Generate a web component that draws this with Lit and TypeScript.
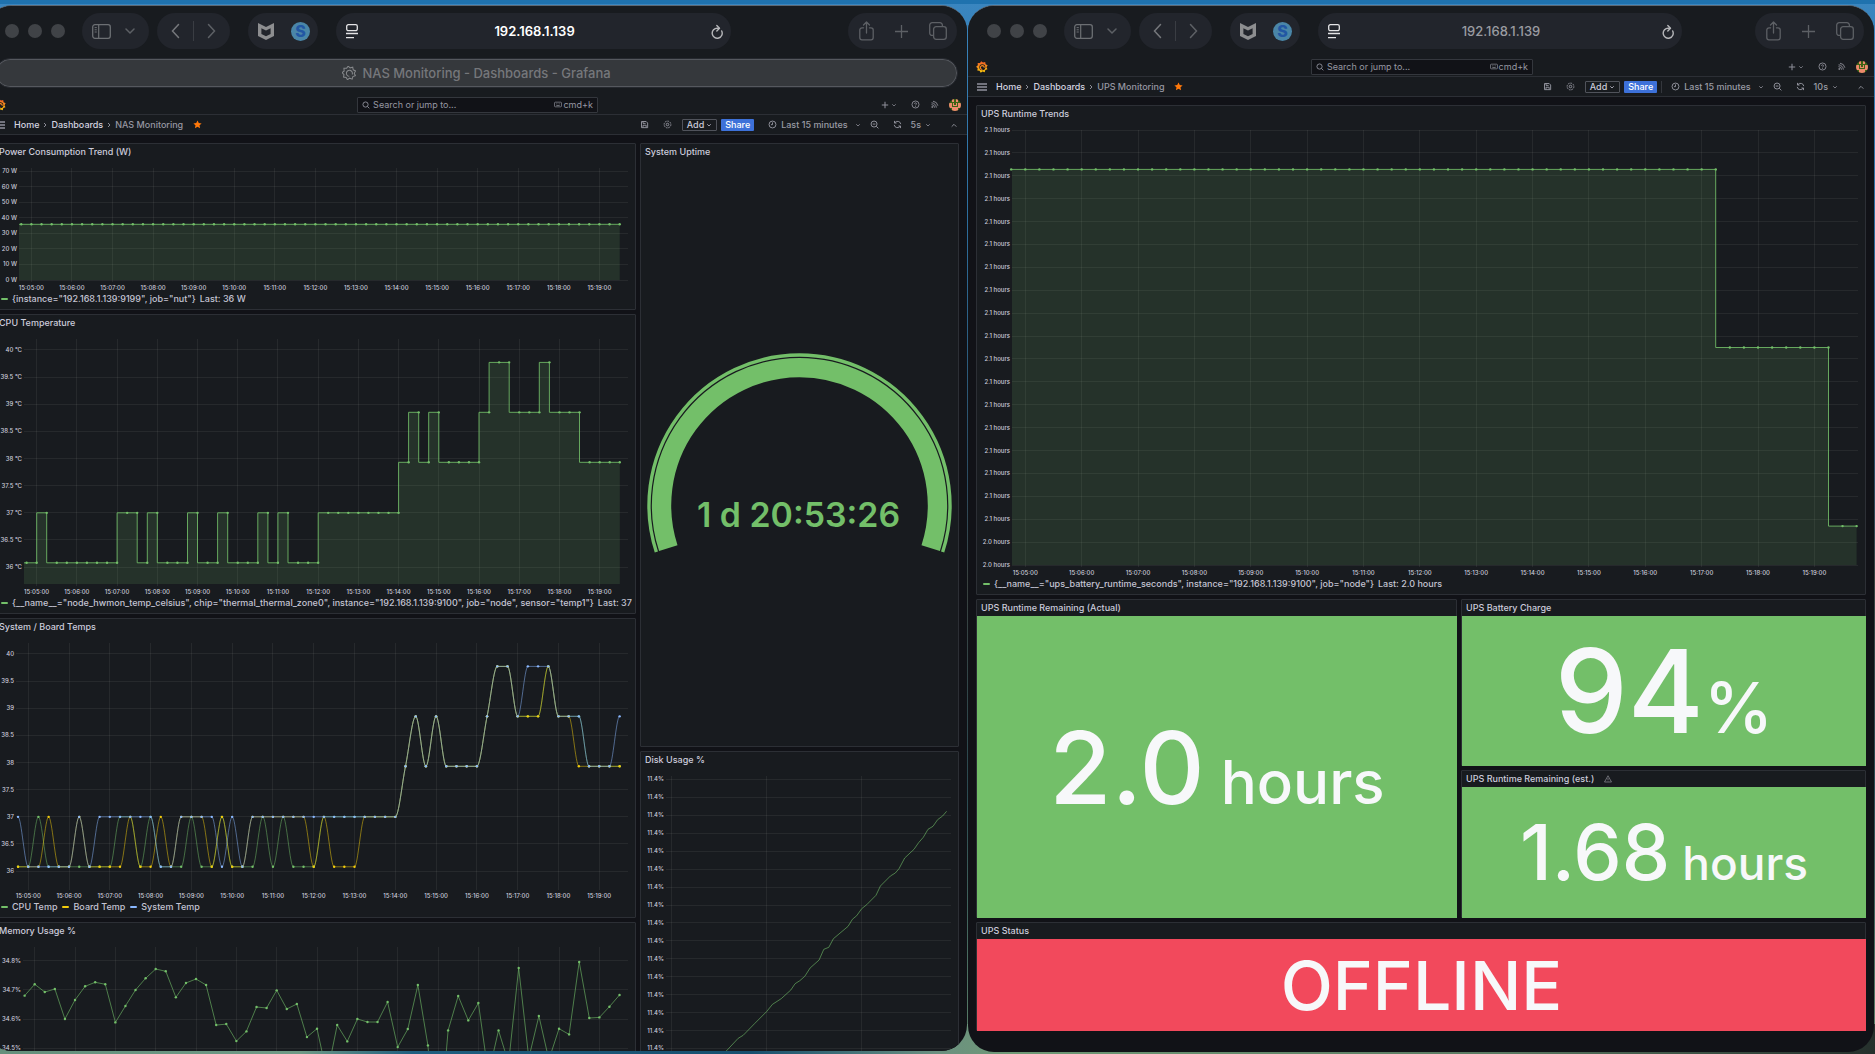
import { LitElement, html, svg, css, nothing } from "lit";
import { customElement, property, state } from "lit/decorators.js";

const GREEN = "#73bf69";
const YELLOW = "#f2cc0c";
const BLUE = "#8ab8ff";

interface Series {
  color: string;
  values: number[];
  times?: number[];
}
interface Tick {
  at: number;
  label: string;
}
interface ChartSpec {
  left: number;
  foot: number;
  tMin: number;
  tMax: number;
  vMin: number;
  vMax: number;
  yTicks: Tick[];
  xTicks: Tick[];
  series: Series[];
  shape: "step" | "smooth" | "linear";
  fill?: boolean;
  dots?: boolean;
}

const minuteTicks = (labels = true): Tick[] =>
  Array.from({ length: 15 }, (_, i) => ({ at: i, label: labels ? `15:${String(i + 5).padStart(2, "0")}:00` : "" }));

const range = (from: number, to: number, step: number, fmt: (v: number) => string): Tick[] => {
  const out: Tick[] = [];
  for (let i = 0; from + i * step <= to + 0.0001; i++) {
    const at = from + i * step;
    out.push({ at, label: fmt(at) });
  }
  return out;
};

/** Temperature levels, one digit per 15 s sample. */
const LEVELS = [36.08, 37, 37.93, 38.85, 39.77];
const levels = (code: string) => [...code].map((c) => LEVELS[Number(c)]);

const cpuTemp = levels("001000000011010001001000101000" + "111111112323222234433343332222");
const boardTemp = levels("000100100001001011101001111110" + "100011112323222234433343322222");
const sysTemp = levels("100000101111110011110101111111" + "111111112323222234434443332223");

const memory = [
  288, 254, 277, 268, 358, 301, 260, 248, 254, 368, 319, 271, 236, 208, 215, 293, 250, 238, 256, 376, 373, 424, 395,
  322, 325, 272, 328, 313, 412, 387, 525, 376, 425, 358, 367, 367, 307, 442, 388, 256, 437, 750, 392, 289, 362, 310,
  525, 392, 490, 205, 475, 349, 480, 387, 404, 187, 355, 353, 321, 286,
].map((y) => 34.8 - (y - 184) / 870);

const diskPath: [number, number][] = [
  [270, 982], [290, 962], [325, 925], [340, 916], [375, 880], [410, 845], [428, 823], [454, 806], [483, 780],
  [496, 761], [510, 752], [525, 739], [541, 714], [568, 690], [582, 658], [597, 652], [611, 626], [655, 589],
  [668, 568], [681, 557], [696, 536], [711, 524], [739, 496], [752, 468], [782, 438], [797, 429], [808, 416],
  [825, 384], [853, 358], [867, 338], [881, 322], [895, 298], [910, 289], [924, 269], [939, 258], [951, 244],
];

const powerSpec: ChartSpec = {
  left: 24, foot: 12, tMin: -0.305, tMax: 14.705, vMin: 0, vMax: 72,
  yTicks: range(0, 70, 10, (v) => `${v} W`),
  xTicks: minuteTicks(),
  series: [{ color: GREEN, values: Array(60).fill(35.8) }],
  shape: "step", fill: true, dots: true,
};
const cpuSpec: ChartSpec = {
  left: 29, foot: 12, tMin: -0.315, tMax: 14.705, vMin: 35.69, vMax: 40.2,
  yTicks: range(36, 40, 0.5, (v) => `${v} °C`),
  xTicks: minuteTicks(),
  series: [{ color: GREEN, values: cpuTemp }],
  shape: "step", fill: true, dots: true,
};
const boardSpec: ChartSpec = {
  left: 21, foot: 12, tMin: -0.3, tMax: 14.705, vMin: 35.69, vMax: 40.2,
  yTicks: range(36, 40, 0.5, (v) => `${v}`),
  xTicks: minuteTicks(),
  series: [
    { color: GREEN, values: cpuTemp },
    { color: YELLOW, values: boardTemp },
    { color: BLUE, values: sysTemp },
  ],
  shape: "smooth", dots: true,
};
const memorySpec: ChartSpec = {
  left: 28, foot: 30, tMin: -0.29, tMax: 14.71, vMin: 34.49, vMax: 34.848,
  yTicks: range(34.5, 34.8, 0.1, (v) => `${v.toFixed(1)}%`),
  xTicks: minuteTicks(false),
  series: [{ color: GREEN, values: memory }],
  shape: "linear", dots: true,
};
const diskSpec: ChartSpec = {
  left: 25, foot: 30, tMin: -0.28, tMax: 14.74, vMin: -15.14, vMax: 0.195,
  yTicks: range(-15, 0, 1, () => "11.4%"),
  xTicks: [0, 5, 10].map((at) => ({ at, label: "" })),
  series: [
    { color: GREEN, values: diskPath.map(([, y]) => -(y - 148.5) / 53.8), times: diskPath.map(([x]) => (x - 124) / 57) },
  ],
  shape: "linear",
};
const upsSpec: ChartSpec = {
  left: 35, foot: 12, tMin: -0.236, tMax: 14.774, vMin: 0, vMax: 19,
  yTicks: range(0, 19, 1, (v) => (v < 2 ? "2.0 hours" : "2.1 hours")),
  xTicks: minuteTicks(),
  series: [{ color: GREEN, values: [...Array(51).fill(17.28), ...Array(8).fill(9.5), 1.7, 1.7] }],
  shape: "step", fill: true, dots: true,
};

@customElement("time-chart")
class TimeChart extends LitElement {
  @property({ attribute: false }) spec!: ChartSpec;
  @state() private w = 0;
  @state() private h = 0;
  private observer?: ResizeObserver;

  static styles = css`
    :host { display: block; flex: 1; min-height: 0; min-width: 0; overflow: hidden; }
    .plot { display: block; font: 500 6px/1 Inter, sans-serif; }
    .grid { stroke: rgba(204, 214, 204, 0.08); stroke-width: 1; shape-rendering: crispEdges; }
    .tick { fill: #ccccdc; }
  `;

  connectedCallback() {
    super.connectedCallback();
    this.observer = new ResizeObserver(() => this.measure());
    this.observer.observe(this);
  }
  disconnectedCallback() {
    super.disconnectedCallback();
    this.observer?.disconnect();
  }
  private measure() {
    this.w = this.clientWidth;
    this.h = this.clientHeight;
  }

  private line(pts: [number, number][], left: number) {
    const f = (n: number) => n.toFixed(1);
    if (this.spec.shape === "step") {
      let d = `M${f(left)} ${f(pts[0][1])}H${f(Math.max(left, pts[0][0]))}`;
      for (let i = 1; i < pts.length; i++) {
        if (pts[i][1] !== pts[i - 1][1]) d += `V${f(pts[i][1])}`;
        d += `H${f(pts[i][0])}`;
      }
      return d;
    }
    if (this.spec.shape === "linear") {
      return "M" + pts.map(([x, y]) => `${f(x)} ${f(y)}`).join("L");
    }
    const slope = (i: number) => (pts[i + 1][1] - pts[i][1]) / (pts[i + 1][0] - pts[i][0]);
    const tangent = (i: number) => {
      if (i === 0 || i === pts.length - 1) return 0;
      const a = slope(i - 1);
      const b = slope(i);
      return a * b <= 0 ? 0 : (2 * a * b) / (a + b);
    };
    let d = `M${f(pts[0][0])} ${f(pts[0][1])}`;
    for (let i = 0; i < pts.length - 1; i++) {
      const [x0, y0] = pts[i];
      const [x1, y1] = pts[i + 1];
      const t = (x1 - x0) / 3;
      d += `C${f(x0 + t)} ${f(y0 + t * tangent(i))} ${f(x1 - t)} ${f(y1 - t * tangent(i + 1))} ${f(x1)} ${f(y1)}`;
    }
    return d;
  }

  render() {
    if (!this.w || !this.h) return nothing;
    const s = this.spec;
    const top = 8;
    const right = this.w - 7;
    const bottom = this.h - s.foot;
    const X = (t: number) => s.left + ((t - s.tMin) / (s.tMax - s.tMin)) * (right - s.left);
    const Y = (v: number) => bottom - ((v - s.vMin) / (s.vMax - s.vMin)) * (bottom - top);
    const strength = s.fill ? 0.85 : s.shape === "smooth" ? 0.5 : 0.6;
    return html`<svg class="plot" width=${this.w} height=${this.h} role="img" aria-label="Time series">
      ${s.yTicks.map(
        (t) => svg`<line class="grid" x1=${s.left} x2=${right} y1=${Y(t.at)} y2=${Y(t.at)}></line>
          <text class="tick" x=${s.left - 2} y=${Y(t.at) + 2} text-anchor="end">${t.label}</text>`
      )}
      ${s.xTicks.map(
        (t) => svg`<line class="grid" x1=${X(t.at)} x2=${X(t.at)} y1=${top} y2=${bottom + 2}></line>
          ${t.label ? svg`<text class="tick" x=${X(t.at)} y=${bottom + 10} text-anchor="middle">${t.label}</text>` : nothing}`
      )}
      ${s.series.map((serie) => {
        const pts = serie.values.map((v, i): [number, number] => [
          X(serie.times ? serie.times[i] : -0.25 + i * 0.25),
          Y(v),
        ]);
        const d = this.line(pts, s.left);
        return svg`
          ${s.fill ? svg`<path d=${`${d}V${bottom}H${s.left}Z`} fill=${serie.color} fill-opacity="0.15"></path>` : nothing}
          <path d=${d} fill="none" stroke=${serie.color} stroke-width="1" stroke-opacity=${strength}></path>
          ${s.dots ? pts.map(([x, y]) => svg`<circle cx=${x} cy=${y} r="1.2" fill=${serie.color}></circle>`) : nothing}`;
      })}
    </svg>`;
  }
}

@customElement("uptime-gauge")
class UptimeGauge extends LitElement {
  @property() value = "";
  static styles = css`
    :host { flex: 1; display: flex; align-items: center; justify-content: center; padding: 0 6px; min-height: 0; }
    .dial { display: block; width: 100%; max-height: 100%; }
    .ring { fill: none; stroke: #73bf69; }
    .value { fill: #73bf69; font: 600 34px/1 Inter, sans-serif; }
  `;
  private arc(r: number) {
    const a = (18 * Math.PI) / 180;
    const dx = r * Math.cos(a);
    const y = 153 + r * Math.sin(a);
    return `M${153 - dx} ${y}A${r} ${r} 0 1 1 ${153 + dx} ${y}`;
  }
  render() {
    return html`<svg class="dial" viewBox="0 0 306 200" role="img" aria-label="System uptime">
      <path class="ring" d=${this.arc(151)} stroke-width="3.4"></path>
      <path class="ring" d=${this.arc(138.4)} stroke-width="19.4"></path>
      <text class="value" x="152" y="175" text-anchor="middle">${this.value}</text>
    </svg>`;
  }
}

@customElement("dash-panel")
class DashPanel extends LitElement {
  @property() heading = "";
  @property({ type: Boolean }) warning = false;
  @property({ attribute: false }) legend: { color: string; text: string; last?: string }[] = [];
  static styles = css`
    :host {
      display: flex; flex-direction: column; box-sizing: border-box; min-width: 0; min-height: 0;
      background: #181b1f; border: 1px solid #2c2f35; border-radius: 1px; font-family: Inter, sans-serif;
    }
    .head { display: flex; align-items: center; gap: 10px; height: 16px; flex: none; padding: 0 4px; }
    .title { margin: 0; font-size: 9px; line-height: 16px; font-weight: 500; color: #ccccdc; white-space: nowrap; }
    .warn { width: 8px; height: 8px; display: block; }
    .legend {
      display: flex; gap: 5px; height: 14px; flex: none; margin: 0 3px 3px 6px; padding: 0; list-style: none;
      overflow: hidden; font-size: 9px; line-height: 14px; font-weight: 500; color: #c4c4d3; white-space: nowrap;
    }
    .entry { display: flex; align-items: center; gap: 4px; flex: none; }
    .dash { width: 7px; height: 2px; border-radius: 1px; }
    .green { background: #73bf69; }
    .yellow { background: #f2cc0c; }
    .blue { background: #8ab8ff; }
  `;
  render() {
    return html`
      <header class="head">
        <h2 class="title">${this.heading}</h2>
        ${this.warning
          ? html`<svg class="warn" viewBox="0 0 16 16" fill="none" stroke="#85878f" stroke-width="1.5">
              <path d="M8 1.5 15 14H1Z" stroke-linejoin="round"></path><path d="M8 6v4M8 11.4v1.2"></path>
            </svg>`
          : nothing}
      </header>
      <slot></slot>
      ${this.legend.length
        ? html`<ul class="legend">
            ${this.legend.map(
              (l) => html`<li class="entry"><span class="dash ${l.color}"></span><span>${l.text}</span>${l.last
                ? html`<span>${l.last}</span>`
                : nothing}</li>`
            )}
          </ul>`
        : nothing}
    `;
  }
}

const petals = (() => {
  const pts: string[] = [];
  for (let i = 0; i < 18; i++) {
    const r = i % 2 ? 9 : 11.8;
    const a = (i / 18) * Math.PI * 2 - 0.3;
    pts.push(`${(12 + r * Math.cos(a)).toFixed(1)} ${(12 + r * Math.sin(a)).toFixed(1)}`);
  }
  return `M${pts.join("L")}Z`;
})();
const spiral = "M17.500 14.500a5.200 5.200 0 1 0-5 3.200";

const icon = (cls: string, box: string, body: unknown) =>
  html`<svg class=${cls} viewBox=${box} aria-hidden="true">${body}</svg>`;

const caret = () => icon("caret", "0 0 12 12", svg`<path d="M2.5 4.5 6 8l3.5-3.5"></path>`);

@customElement("browser-window")
class BrowserWindow extends LitElement {
  @property() address = "";
  @property() tab = "";
  @property() dashboard = "";
  @property() interval = "";
  @property({ type: Boolean }) focused = false;
  @property({ type: Boolean }) divider = false;

  static styles = css`
    :host {
      display: flex; flex-direction: column; box-sizing: border-box; min-width: 0; overflow: hidden;
      border-top: 1px solid #5d6873; border-radius: 26px; background: #111217;
      font-family: Inter, sans-serif; color: #ccccdc;
    }
    svg { display: block; flex: none; fill: none; stroke: currentColor; }
    button, input { font: inherit; color: inherit; margin: 0; padding: 0; border: 0; background: none; min-width: 0; outline: none; }
    button { display: flex; align-items: center; }
    a { color: inherit; text-decoration: none; }

    .chrome { display: flex; align-items: center; flex: none; height: 51px; box-sizing: border-box; padding: 0 10px 1px 19px; background: #181b1f; }
    .lights { display: flex; gap: 9px; margin-right: 17px; }
    .light { width: 14px; height: 14px; border-radius: 50%; background: #404347; }
    .pill { display: flex; align-items: center; box-sizing: border-box; height: 36px; border-radius: 18px; background: #22252c; color: #5d6065; }
    .views { width: 67px; padding: 0 14px 0 10px; justify-content: space-between; margin-right: 8px; }
    .history { width: 73px; padding: 0 14px; justify-content: space-between; margin-right: 18px; }
    .extensions { width: 70px; padding: 0 8px 0 10px; justify-content: space-between; margin-right: 18px; }
    .rule { width: 1px; height: 20px; background: #3a3d43; }
    .location { width: 41.5%; padding: 0 8px 0 10px; gap: 8px; color: #9a9ba0; }
    .url { flex: 1; width: 0; text-align: center; font-size: 13px; line-height: 20px; font-weight: 500; color: #9a9ca1; }
    .url.on { color: #fff; font-weight: 600; }
    .actions { width: 109px; margin-left: auto; padding: 0 10px 0 11px; justify-content: space-between; }
    .side { width: 19px; height: 15px; color: #6c6f73; }
    .down { width: 10px; height: 10px; }
    .arrow { width: 9px; height: 16px; }
    .arrow.back { color: #75777b; }
    .shield { width: 16px; height: 17px; fill: #8d8e90; stroke: none; }
    .skype { width: 19px; height: 19px; border-radius: 50%; background: #4a86a8; color: #2257a4; justify-content: center; font-size: 16px; line-height: 19px; font-weight: 800; }
    .reader { width: 12px; height: 15px; color: #e4e4e6; }
    .reload { width: 12px; height: 15px; color: #b5b6b9; }
    .share { width: 15px; height: 20px; }
    .new { width: 13px; height: 13px; }
    .stack { width: 18px; height: 18px; }

    .tabs { flex: none; height: 38px; box-sizing: border-box; padding: 1px 9px 0; background: #181b1f; }
    .tab {
      display: flex; align-items: center; justify-content: center; gap: 6px; height: 30px; box-sizing: border-box; width: 100%;
      border-radius: 15px; border: 1px solid #26292f; box-shadow: inset 0 0 0 1px #55585e; background: #35383c;
      font-size: 13px; line-height: 20px; font-weight: 500; color: #75777b;
    }
    .favicon { width: 14px; height: 14px; color: #85878a; }

    .bar { display: flex; align-items: center; flex: none; height: 20px; box-sizing: border-box; background: #181b1f; border-bottom: 1px solid #2c2f35; font-size: 9px; line-height: 12px; }
    .top { padding: 0 6px 0 8px; justify-content: space-between; }
    .edge { flex: 1; display: flex; align-items: center; }
    .user { justify-content: flex-end; gap: 10px; color: #8e8f99; }
    .logo { width: 12px; height: 12px; }
    .search { display: flex; align-items: center; width: 24.9%; height: 16px; box-sizing: border-box; padding: 0 4px; gap: 3px; border: 1px solid #34373d; border-radius: 1px; background: #111217; color: #9697a2; }
    .query { flex: 1; width: 0; font-size: 9px; line-height: 12px; }
    .query::placeholder { color: #9697a2; opacity: 1; }
    .hint { display: flex; align-items: center; gap: 1px; }
    .keys { width: 8px; height: 7px; }
    .i { width: 9px; height: 9px; stroke-width: 1.2; }
    .i7 { width: 8px; height: 8px; stroke-width: 1.3; }
    .caret { width: 6px; height: 6px; stroke-width: 1.5; }
    .create { gap: 2px; margin-right: 4px; }
    .avatar { width: 12px; height: 12px; border-radius: 50%; }

    .nav { padding: 0 9px; color: #9a9ba5; font-weight: 500; }
    .menu { width: 10px; height: 10px; color: #ccccdc; margin-right: 9px; }
    .crumbs { display: flex; align-items: center; gap: 4px; }
    .crumb { color: #d5d5e0; }
    .here { color: #9697a2; }
    .sep { width: 4px; height: 6px; }
    .star { width: 9px; height: 9px; fill: #ff780a; stroke: none; margin-left: 10px; }
    .tools { display: flex; align-items: center; margin-left: auto; }
    .save { margin-right: 14px; }
    .gear { margin-right: 10px; }
    .add { gap: 2px; height: 12px; padding: 0 4px; border: 1px solid #50535b; color: #ccccdc; box-sizing: border-box; margin-right: 4px; border-radius: 1px; }
    .go { height: 12px; padding: 0 4px; background: #3d71d9; color: #fff; border-radius: 1px; }
    .split { width: 1px; height: 12px; margin: 0 9px 0 4px; }
    .split.on { background: #34373d; }
    .time { gap: 4px; margin-right: 9px; }
    .time .caret { margin-left: 3px; }
    .zoom { margin-right: 14px; }
    .refresh { margin-right: 9px; }
    .every { gap: 4px; margin-right: 19px; }
    .body { flex: 1; min-height: 0; padding: 8px; overflow: hidden; }
  `;

  render() {
    return html`
      <div class="chrome">
        <div class="lights"><span class="light"></span><span class="light"></span><span class="light"></span></div>
        <div class="pill views">
          <button aria-label="Sidebar">${icon("side", "0 0 19 15", svg`<rect x=".7" y=".7" width="17.6" height="13.6" rx="2.2" stroke-width="1.3"></rect><path d="M6.7.7v13.6" stroke-width="1.2"></path><path d="M2.6 3.6h2.2M2.6 5.8h2.2M2.6 8h2.2"></path>`)}</button>
          <button aria-label="Tab groups">${icon("down", "0 0 10 10", svg`<path d="M1 3l4 4 4-4" stroke-width="1.5" stroke-linecap="round"></path>`)}</button>
        </div>
        <div class="pill history">
          <button aria-label="Back">${icon("arrow back", "0 0 9 16", svg`<path d="M7.5 1.5 1.5 8l6 6.5" stroke-width="1.5" stroke-linecap="round"></path>`)}</button>
          <span class="rule"></span>
          <button aria-label="Forward">${icon("arrow", "0 0 9 16", svg`<path d="m1.5 1.5 6 6.5-6 6.5" stroke-width="1.5" stroke-linecap="round"></path>`)}</button>
        </div>
        <div class="pill extensions">
          <button aria-label="Web protection">${icon("shield", "0 0 16 17", svg`<path fill-rule="evenodd" d="M0 0 8 4l8-4v13l-8 4-8-4ZM3.4 5.2v5.9L8 13.3l4.6-2.2V5.2L8 7.6Z"></path>`)}</button>
          <button class="skype" aria-label="Extension">S</button>
        </div>
        <div class="pill location">
          ${icon("reader", "0 0 12 15", svg`<rect x=".7" y=".7" width="10.6" height="6" rx="1.6" stroke-width="1.3"></rect><path d="M0 9.5h12M0 13.6h8" stroke-width="1.3"></path>`)}
          <input class="url ${this.focused ? "on" : ""}" aria-label="Address" .value=${this.address} />
          <button aria-label="Reload">${icon("reload", "0 0 12 15", svg`<path d="M10.700 7A5 5 0 1 1 6.400 4.200H8" stroke-width="1.4" stroke-linecap="round"></path><path d="M5.800 1.400 8.500 4.200 5.800 7" stroke-width="1.4" stroke-linecap="round" stroke-linejoin="round"></path>`)}</button>
        </div>
        <div class="pill actions">
          <button aria-label="Share page">${icon("share", "0 0 15 20", svg`<path d="M4.6 6.8H3A2.2 2.2 0 0 0 .8 9v7.6A2.2 2.2 0 0 0 3 18.8h9a2.2 2.2 0 0 0 2.2-2.2V9A2.2 2.2 0 0 0 12 6.8h-1.600M7.5 12V1.200M4.500 4l3-3 3 3" stroke-width="1.3" stroke-linecap="round" stroke-linejoin="round"></path>`)}</button>
          <button aria-label="New tab">${icon("new", "0 0 13 13", svg`<path d="M6.5 0v13M0 6.5h13" stroke-width="1.3"></path>`)}</button>
          <button aria-label="Tab overview">${icon("stack", "0 0 18 18", svg`<rect x="4.6" y="4.6" width="12.7" height="12.7" rx="2.6" stroke-width="1.3"></rect><path d="M13.4 4.4V3.2A2.5 2.5 0 0 0 10.9.7H3.2A2.5 2.5 0 0 0 .7 3.2v7.7a2.5 2.5 0 0 0 2.5 2.5h1.2" stroke-width="1.3"></path>`)}</button>
        </div>
      </div>
      ${this.tab
        ? html`<div class="tabs"><button class="tab">
            ${icon("favicon", "0 0 24 24", svg`<path d=${petals} stroke-width="1.8"></path><path d=${spiral} stroke-width="1.8"></path>`)}
            <span>${this.tab}</span></button></div>`
        : nothing}
      <div class="bar top">
        <div class="edge"><a href="#" aria-label="Grafana">
          ${icon("logo", "0 0 24 24", svg`<defs><linearGradient id="g" x1="0" y1="0" x2="0" y2="1"><stop offset="0" stop-color="#f05a28"></stop><stop offset="1" stop-color="#fbca0a"></stop></linearGradient></defs><path d=${petals} fill="url(#g)" stroke="none"></path><circle cx="12.6" cy="12.6" r="6" fill="#181b1f" stroke="none"></circle><path d="M16.5 13.5a3.9 3.9 0 1 0-3.900 3.500" stroke="#f6861f" stroke-width="2.2"></path>`)}
        </a></div>
        <label class="search">
          ${icon("i7", "0 0 12 12", svg`<circle cx="5.3" cy="5.3" r="3.9"></circle><path d="m8.2 8.2 2.8 2.8"></path>`)}
          <input class="query" type="text" aria-label="Search" placeholder="Search or jump to..." />
          <span class="hint">${icon("keys", "0 0 12 10", svg`<rect x=".8" y="1.5" width="10.4" height="7" rx="1.2"></rect><path d="M3 4h1M5.5 4h1M8 4h1M3.5 6.5h5"></path>`)}<span>cmd+k</span></span>
        </label>
        <div class="edge user">
          <button class="create" aria-label="New">${icon("i7", "0 0 10 10", svg`<path d="M5 1v8M1 5h8"></path>`)}${caret()}</button>
          <button aria-label="Help">${icon("i", "0 0 12 12", svg`<circle cx="6" cy="6" r="4.7"></circle><path d="M4.7 5a1.3 1.3 0 1 1 1.7 1.3c-.3.1-.4.3-.4.7M6 8v1"></path>`)}</button>
          <button aria-label="News">${icon("i", "0 0 12 12", svg`<path d="M2 6.2a4 4 0 0 1 4 4M2 3.8a6.4 6.4 0 0 1 6.4 6.4M4 1.6a7.5 7.5 0 0 1 6.5 6"></path><circle cx="3" cy="9.3" r=".7" fill="currentColor"></circle>`)}</button>
          <button aria-label="Profile">${icon("avatar", "0 0 12 12", svg`<rect width="12" height="12" fill="#3f6414" stroke="none"></rect><path stroke="none" fill="#ee8a6c" d="M3 0h2v3H3zM7 0h2v3H7zM0 4h3v5H0zM9 4h3v5H9zM4 4h1v3H4zM7 4h1v3H7zM3 8h6v4H3zM5 6h2v1H5z"></path>`)}</button>
        </div>
      </div>
      <div class="bar nav">
        <button aria-label="Menu">${icon("menu", "0 0 10 10", svg`<path d="M0 2h10M0 5h10M0 8h10" stroke-width="1.1"></path>`)}</button>
        <nav class="crumbs" aria-label="Breadcrumb">
          <a class="crumb" href="#">Home</a>
          ${icon("sep", "0 0 4 6", svg`<path d="m1 1 2 2-2 2" stroke-width=".9"></path>`)}
          <a class="crumb" href="#">Dashboards</a>
          ${icon("sep", "0 0 4 6", svg`<path d="m1 1 2 2-2 2" stroke-width=".9"></path>`)}
          <span class="here">${this.dashboard}</span>
        </nav>
        <button aria-label="Starred">${icon("star", "0 0 24 24", svg`<path d="m12 1 3.4 7 7.6 1-5.6 5.3 1.4 7.7L12 18.3 5.2 22l1.4-7.7L1 9l7.6-1Z"></path>`)}</button>
        <div class="tools">
          <button class="save" aria-label="Save">${icon("i", "0 0 12 12", svg`<path d="M2 2h6.2L10.2 4v6.200H2ZM4 2v2.500h3.500M4 10V7h4.200v3"></path>`)}</button>
          <button class="gear" aria-label="Settings">${icon("i", "0 0 12 12", svg`<circle cx="6" cy="6" r="1.7"></circle><circle cx="6" cy="6" r="4.5" stroke-dasharray="2.4 1"></circle>`)}</button>
          <button class="add">Add ${caret()}</button>
          <button class="go">Share</button>
          <span class="split ${this.divider ? "on" : ""}"></span>
          <button class="time">${icon("i", "0 0 12 12", svg`<circle cx="6" cy="6" r="4.6"></circle><path d="M6 3.2V6.200H4"></path>`)}<span>Last 15 minutes</span>${caret()}</button>
          <button class="zoom" aria-label="Zoom out">${icon("i", "0 0 12 12", svg`<circle cx="5.4" cy="5.4" r="4"></circle><path d="m8.4 8.4 2.8 2.8M3.600 5.400h3.600"></path>`)}</button>
          <button class="refresh" aria-label="Refresh">${icon("i", "0 0 12 12", svg`<path d="M10.4 5.5a4.4 4.4 0 0 0-8-1.8M1.6 6.5a4.4 4.4 0 0 0 8 1.8M2 1.2v2.800h2.800M10 10.800V8H7.200"></path>`)}</button>
          <button class="every" aria-label="Refresh interval">${this.interval}${caret()}</button>
          <button aria-label="Collapse">${icon("i7", "0 0 12 12", svg`<path d="m2.5 8.5 3.5-3.500 3.500 3.500"></path>`)}</button>
        </div>
      </div>
      <div class="body"><slot></slot></div>
    `;
  }
}

@customElement("app-root")
class AppRoot extends LitElement {
  static styles = css`
    :host { display: block; font-family: Inter, sans-serif; }
    .desktop {
      display: flex; gap: 1px; box-sizing: border-box; height: 100vh; padding: 5px 1px 2px 0; overflow: hidden;
      background:
        linear-gradient(#1f72ae, #1f72ae) top / 100% 4px no-repeat,
        linear-gradient(90deg, #64907c, #6f9a86 16%, #205f80 22%, #17506f 40%, #6b9080 50%, #6f9a76 54%, #5a7a62 80%, #25302c) bottom / 100% 30px no-repeat,
        linear-gradient(#3a86c0, #2d6f9f 20%, #2b4d63 45%, #39413f 55%, #2b4b52 75%, #5b8068);
    }
    .nas { flex: 981; margin: 0 0 1px -14px; }
    .ups { flex: 906; }
    .nas-grid { display: grid; grid-template-columns: 642fr 319fr; gap: 4px; }
    .column { display: grid; gap: 4px; align-content: start; min-width: 0; }
    .nas-left { grid-template-rows: 167px 300px 300px 160px; }
    .nas-right { grid-template-rows: 604px 331px; }
    .ups-grid { display: grid; gap: 4px; grid-template-columns: 481fr 405fr; grid-template-rows: 490px 167px 148px 109px; }
    .wide { grid-column: 1 / -1; }
    .tall { grid-row: 2 / 4; }
    .stat { flex: 1; display: flex; align-items: center; justify-content: center; margin: 0 -1px -1px 0; color: #f7f8fa; font-weight: 500; white-space: nowrap; }
    .reading { line-height: 1; white-space: pre; }
    .good { background: #73bf69; }
    .bad { background: #f2495c; }
    .runtime { font-size: 101px; }
    .runtime-unit { font-size: 60px; }
    .charge { font-size: 116px; }
    .charge-unit { font-size: 70px; }
    .estimate { font-size: 77px; }
    .estimate-unit { font-size: 46px; }
    .status { font-size: 68px; }
  `;
  render() {
    return html`<main class="desktop">
      <browser-window class="nas" address="192.168.1.139" tab="NAS Monitoring - Dashboards - Grafana" dashboard="NAS Monitoring" interval="5s" focused>
        <div class="nas-grid">
          <div class="column nas-left">
            <dash-panel heading="Power Consumption Trend (W)" .legend=${[{ color: "green", text: '{instance="192.168.1.139:9199", job="nut"}', last: "Last: 36 W" }]}>
              <time-chart .spec=${powerSpec}></time-chart>
            </dash-panel>
            <dash-panel heading="CPU Temperature" .legend=${[{ color: "green", text: '{__name__="node_hwmon_temp_celsius", chip="thermal_thermal_zone0", instance="192.168.1.139:9100", job="node", sensor="temp1"}', last: "Last: 37" }]}>
              <time-chart .spec=${cpuSpec}></time-chart>
            </dash-panel>
            <dash-panel heading="System / Board Temps" .legend=${[{ color: "green", text: "CPU Temp" }, { color: "yellow", text: "Board Temp" }, { color: "blue", text: "System Temp" }]}>
              <time-chart .spec=${boardSpec}></time-chart>
            </dash-panel>
            <dash-panel heading="Memory Usage %"><time-chart .spec=${memorySpec}></time-chart></dash-panel>
          </div>
          <div class="column nas-right">
            <dash-panel heading="System Uptime"><uptime-gauge value="1 d 20:53:26"></uptime-gauge></dash-panel>
            <dash-panel heading="Disk Usage %"><time-chart .spec=${diskSpec}></time-chart></dash-panel>
          </div>
        </div>
      </browser-window>
      <browser-window class="ups" address="192.168.1.139" dashboard="UPS Monitoring" interval="10s" divider>
        <div class="ups-grid">
          <dash-panel class="wide" heading="UPS Runtime Trends" .legend=${[{ color: "green", text: '{__name__="ups_battery_runtime_seconds", instance="192.168.1.139:9100", job="node"}', last: "Last: 2.0 hours" }]}>
            <time-chart .spec=${upsSpec}></time-chart>
          </dash-panel>
          <dash-panel class="tall" heading="UPS Runtime Remaining (Actual)">
            <div class="stat good"><div class="reading"><span class="runtime">2.0</span><span class="runtime-unit"> hours</span></div></div>
          </dash-panel>
          <dash-panel heading="UPS Battery Charge">
            <div class="stat good"><div class="reading"><span class="charge">94</span><span class="charge-unit">%</span></div></div>
          </dash-panel>
          <dash-panel heading="UPS Runtime Remaining (est.)" warning>
            <div class="stat good"><div class="reading"><span class="estimate">1.68</span><span class="estimate-unit"> hours</span></div></div>
          </dash-panel>
          <dash-panel class="wide" heading="UPS Status">
            <div class="stat bad"><div class="reading status">OFFLINE</div></div>
          </dash-panel>
        </div>
      </browser-window>
    </main>`;
  }
}
